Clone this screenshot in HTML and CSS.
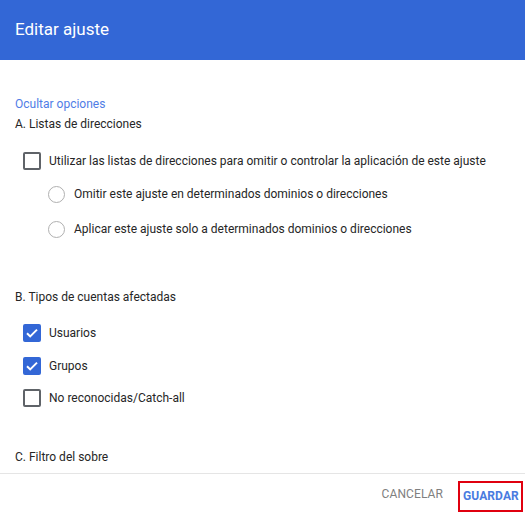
FILE: index.html
```html
<!DOCTYPE html>
<html lang="es">
<head>
<meta charset="utf-8">
<title>Editar ajuste</title>
<link rel="stylesheet" href="styles.css">
</head>
<body>
<div class="dialog">
  <header class="header"><h1 class="title">Editar ajuste</h1></header>
  <main class="content">
    <a class="link">Ocultar opciones</a>
    <div class="section-title">A. Listas de direcciones</div>
    <div class="opt opt-check first">
      <span class="cb"></span>
      <span class="label">Utilizar las listas de direcciones para omitir o controlar la aplicación de este ajuste</span>
    </div>
    <div class="opt opt-radio r1">
      <span class="radio"></span>
      <span class="label">Omitir este ajuste en determinados dominios o direcciones</span>
    </div>
    <div class="opt opt-radio r2">
      <span class="radio"></span>
      <span class="label">Aplicar este ajuste solo a determinados dominios o direcciones</span>
    </div>

    <div class="section-title sec-b">B. Tipos de cuentas afectadas</div>
    <div class="opt opt-check c1">
      <span class="cb checked"><svg viewBox="0 0 18 18" width="18" height="18"><path d="M4 9.2l3.2 3.2L14 5.6" fill="none" stroke="#fff" stroke-width="2"/></svg></span>
      <span class="label">Usuarios</span>
    </div>
    <div class="opt opt-check c2">
      <span class="cb checked"><svg viewBox="0 0 18 18" width="18" height="18"><path d="M4 9.2l3.2 3.2L14 5.6" fill="none" stroke="#fff" stroke-width="2"/></svg></span>
      <span class="label">Grupos</span>
    </div>
    <div class="opt opt-check c3">
      <span class="cb"></span>
      <span class="label">No reconocidas/Catch-all</span>
    </div>

    <div class="section-title sec-c">C. Filtro del sobre</div>
  </main>
  <footer class="footer">
    <button class="btn btn-cancel">CANCELAR</button>
    <button class="btn btn-save">GUARDAR</button>
  </footer>
</div>
</body>
</html>
```

FILE: styles.css
```css
* { box-sizing: border-box; }
html, body { margin: 0; padding: 0; }
body {
  font-family: Roboto, "Liberation Sans", Arial, sans-serif;
  background: #fff;
  color: #212121;
  width: 525px;
  height: 513px;
  overflow: hidden;
}
.dialog {
  display: flex;
  flex-direction: column;
  height: 513px;
}
.header {
  height: 60px;
  flex: none;
  background: #3367d6;
  display: flex;
  align-items: center;
  padding: 0 15px;
}
.title {
  margin: 0;
  font-size: 17px;
  font-weight: 400;
  color: #fff;
  line-height: 24px;
  padding-bottom: 2px;
}
.content {
  flex: 1;
  overflow: hidden;
  padding: 34px 15px 0;
  display: flex;
  flex-direction: column;
  font-size: 12px;
  border-bottom: 1px solid #e5e5e5;
}
.link {
  color: #4f7de6;
  line-height: 20px;
  font-size: 12px;
}
.section-title {
  line-height: 20px;
  color: #262626;
}
.opt {
  display: flex;
  align-items: center;
  height: 20px;
  line-height: 20px;
  color: #262626;
}
.opt-check { padding-left: 8px; }
.opt-check .label { margin-left: 8px; }
.opt-radio { padding-left: 33px; }
.opt-radio .label { margin-left: 9px; }
.first { margin-top: 17px; }
.r1 { margin-top: 13px; }
.r2 { margin-top: 15px; }
.sec-b { margin-top: 48px; }
.c1 { margin-top: 16px; }
.c2 { margin-top: 13px; }
.c3 { margin-top: 12px; }
.sec-c { margin-top: 39px; }
.cb {
  width: 18px;
  height: 18px;
  border: 2px solid #5f6368;
  border-radius: 2px;
  flex: none;
  display: flex;
  align-items: center;
  justify-content: center;
}
.cb.checked {
  background: #3367d6;
  border-color: #3367d6;
}
.cb svg { display: block; flex: none; }
.radio {
  width: 17px;
  height: 17px;
  border: 1.5px solid #b0b0b0;
  border-radius: 50%;
  flex: none;
}
.footer {
  height: 39px;
  flex: none;
  display: flex;
  justify-content: flex-end;
  align-items: center;
  padding-right: 2px;
  gap: 10px;
}
.btn {
  font-family: Roboto, "Liberation Sans", Arial, sans-serif;
  font-size: 12px;
  font-weight: 500;
  background: none;
  border: 2px solid transparent;
  padding: 0 3px;
  height: 31px;
  cursor: pointer;
  letter-spacing: 0.1px;
}
.btn-cancel { color: #808080; font-weight: 400; }
.btn-save {
  color: #4a7be0;
  border-color: #e0000f;
  width: 65px;
  font-weight: 700;
  margin-top: 5px;
}
```
